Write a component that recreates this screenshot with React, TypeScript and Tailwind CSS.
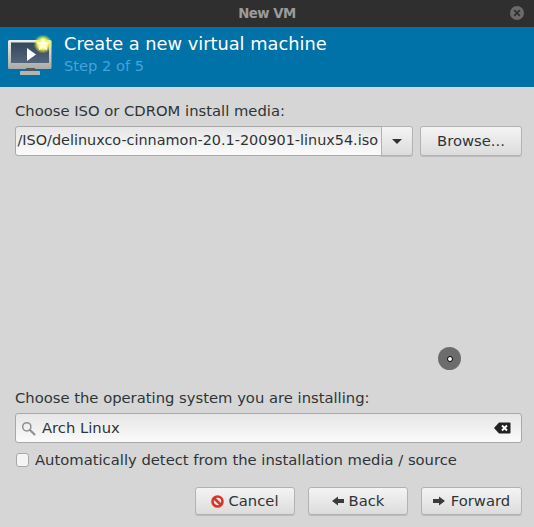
import { ReactNode } from 'react';

const btn = 'flex items-center justify-center rounded-[3px] border border-[#b2b2b2] bg-gradient-to-b from-[#f4f4f4] to-[#dcdcdc] shadow-[0_1px_0_#bcbcbc] text-[#2e3436]';

function VmIcon() {
  return (
    <svg width="48" height="48" viewBox="0 0 48 48" className="shrink-0">
      <defs>
        <radialGradient id="glow">
          <stop offset="0.55" stopColor="#f4f65a" stopOpacity="1" />
          <stop offset="1" stopColor="#e8ea30" stopOpacity="0" />
        </radialGradient>
        <linearGradient id="screen" x1="0" y1="0" x2="0" y2="1">
          <stop offset="0" stopColor="#33465c" />
          <stop offset="1" stopColor="#53657a" />
        </linearGradient>
        <linearGradient id="frame" x1="0" y1="0" x2="0" y2="1">
          <stop offset="0" stopColor="#eeeeec" />
          <stop offset="1" stopColor="#a9a9a6" />
        </linearGradient>
      </defs>
      <rect x="4" y="7" width="43.5" height="29" rx="1.5" fill="url(#frame)" />
      <rect x="7" y="9.5" width="38" height="20.5" fill="url(#screen)" />
      <path d="M23 15 L32 21.5 L23 28 Z" fill="#ffffff" />
      <rect x="22" y="35" width="9" height="3" fill="#55585a" />
      <rect x="16" y="38" width="20" height="4" rx="0.5" fill="#b4b4b2" />
      <circle cx="39" cy="11" r="9.5" fill="url(#glow)" />
      <path d="M39 4.5 L41 8.9 L45.8 9.4 L42.3 12.5 L43.2 17.2 L39 14.8 L34.8 17.2 L35.7 12.5 L32.2 9.4 L37 8.9 Z" fill="#fffde0" />
    </svg>
  );
}

function CancelIcon() {
  return (
    <svg width="13" height="13" viewBox="0 0 13 13" className="shrink-0">
      <circle cx="6.5" cy="6.5" r="5" fill="#f6e9e5" stroke="#d8352a" strokeWidth="2.6" />
      <path d="M3 3 L10 10" stroke="#d8352a" strokeWidth="2.6" />
    </svg>
  );
}

function ArrowIcon({ dir }: { dir: 'left' | 'right' }) {
  return (
    <svg width="12" height="10" viewBox="0 0 12 10" className="shrink-0">
      <path d={dir === 'left' ? 'M0 5 L6 0.5 V3 H12 V7 H6 V9.5 Z' : 'M12 5 L6 0.5 V3 H0 V7 H6 V9.5 Z'} fill="#3b3b3b" />
    </svg>
  );
}

function SearchIcon() {
  return (
    <svg width="15" height="15" viewBox="0 0 15 15" className="shrink-0">
      <circle cx="5.8" cy="5.8" r="4.1" fill="none" stroke="#8f8f8f" strokeWidth="1.5" />
      <path d="M9 9 L13.5 13.5" stroke="#8f8f8f" strokeWidth="2.1" strokeLinecap="round" />
    </svg>
  );
}

function ClearIcon() {
  return (
    <svg width="17" height="12" viewBox="0 0 17 12" className="shrink-0">
      <path d="M5 0.5 H15.5 A1 1 0 0 1 16.5 1.5 V10.5 A1 1 0 0 1 15.5 11.5 H5 L0 6 Z" fill="#222222" />
      <path d="M8 3.5 L13 8.5 M13 3.5 L8 8.5" stroke="#ffffff" strokeWidth="1.9" />
    </svg>
  );
}

function Button({ children, className }: { children: ReactNode; className: string }) {
  return <button className={`${btn} ${className}`}>{children}</button>;
}

export default function App() {
  return (
    <div className="relative flex h-[527px] w-[534px] flex-col overflow-hidden bg-[#d6d6d6] font-['DejaVu_Sans',sans-serif] text-[14.77px] text-[#2e3436]">
      <div className="relative flex h-[27px] shrink-0 items-center justify-center bg-[#2f2f2f] pt-px text-[13.3px] font-bold tracking-[-0.5px] text-[#9b9b9b]">
        New VM
        <span className="absolute right-[10px] top-[6px] flex h-[14px] w-[14px] items-center justify-center rounded-full bg-[#6a6a6a]">
          <svg width="8" height="8" viewBox="0 0 8 8">
            <path d="M1.2 1.2 L6.8 6.8 M6.8 1.2 L1.2 6.8" stroke="#2f2f2f" strokeWidth="1.7" />
          </svg>
        </span>
      </div>

      <div className="flex h-[60px] shrink-0 items-center bg-[#0072a8] pl-[4px]">
        <VmIcon />
        <div className="mb-[6px] ml-[12px] flex flex-col">
          <span className="text-[17.8px] leading-[21px] text-white">Create a new virtual machine</span>
          <span className="mt-[3px] text-[14.67px] leading-[18px] text-[#46a3da]">Step 2 of 5</span>
        </div>
      </div>

      <div className="flex flex-1 flex-col pl-[15px] pr-[12px]">
        <div className="mt-[15px] h-[18px] leading-[18px]">Choose ISO or CDROM install media:</div>
        <div className="mt-[6px] flex h-[30px] items-stretch">
          <div className="flex w-[367px] items-center justify-end overflow-hidden whitespace-nowrap rounded-l-[3px] border border-[#a9a9a9] bg-gradient-to-b from-[#e6e6e6] to-[#fbfbfb] pr-[3px] text-[14.4px]">
            <span className="shrink-0">/ISO/delinuxco-cinnamon-20.1-200901-linux54.iso</span>
          </div>
          <Button className="-ml-px w-[32px] rounded-l-none">
            <svg width="10" height="5" viewBox="0 0 10 5">
              <path d="M0 0 H10 L5 5 Z" fill="#2e3436" />
            </svg>
          </Button>
          <Button className="ml-[7px] flex-1">Browse...</Button>
        </div>

        <div className="flex-1" />

        <div className="h-[18px] leading-[18px]">Choose the operating system you are installing:</div>
        <div className="mt-[6px] flex h-[30px] items-center rounded-[3px] border border-[#a9a9a9] bg-gradient-to-b from-[#e6e6e6] to-[#fbfbfb] pl-[5px] pr-[10px]">
          <SearchIcon />
          <span className="ml-[6px] flex-1">Arch Linux</span>
          <ClearIcon />
        </div>
        <label className="mt-[8px] flex h-[18px] items-center">
          <span className="ml-px h-[14px] w-[13px] rounded-[3px] border border-[#a9a9a9] bg-[#f4f4f4]" />
          <span className="ml-[6px] leading-[18px]">Automatically detect from the installation media / source</span>
        </label>

        <div className="mb-[12px] mt-[18px] flex h-[28px] justify-end gap-[13px]">
          <Button className="w-[100px] gap-[4px]">
            <CancelIcon />
            Cancel
          </Button>
          <Button className="w-[100px] gap-[5px]">
            <ArrowIcon dir="left" />
            Back
          </Button>
          <Button className="w-[101px] gap-[6px]">
            <ArrowIcon dir="right" />
            Forward
          </Button>
        </div>
      </div>

      {/* mouse cursor lying over the window */}
      <div className="absolute left-[438px] top-[347px] flex h-[23px] w-[23px] items-center justify-center rounded-full bg-[#6c6c6c]">
        <span className="h-[6px] w-[6px] rounded-full border border-black bg-white" />
      </div>
    </div>
  );
}
